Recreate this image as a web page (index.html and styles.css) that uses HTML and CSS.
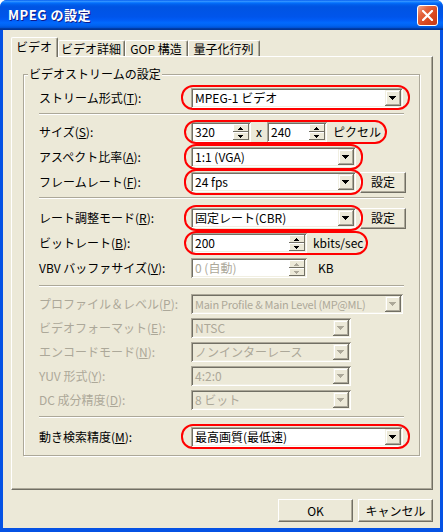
FILE: index.html
```html
<!DOCTYPE html>
<html lang="ja">
<head>
<meta charset="utf-8">
<title>MPEG の設定</title>
<link rel="stylesheet" href="styles.css">
</head>
<body>
<div class="window">
  <div class="titlebar">
    <span class="title">MPEG の設定</span>
    <span class="close"><svg width="11" height="11" viewBox="0 0 11 11"><path d="M1 1L10 10M10 1L1 10" stroke="#fff" stroke-width="2.2" stroke-linecap="square"/></svg></span>
  </div>
  <div class="client">
    <div class="tabs">
      <div class="tab tab-active">ビデオ</div>
      <div class="tab t2">ビデオ詳細</div>
      <div class="tab t3">GOP 構造</div>
      <div class="tab t4">量子化行列</div>
    </div>
    <div class="panel">
      <div class="group">
        <span class="legend">ビデオストリームの設定</span>

        <div class="row r1">
          <span class="label">ストリーム形式(<u>T</u>):</span>
          <div class="combo w-long mark m-stream"><span class="val">MPEG-1 ビデオ</span><span class="drop"><svg width="7" height="4" viewBox="0 0 7 4"><path d="M0 0h7v1h-1v1h-1v1h-1v1h-1v-1h-1v-1h-1v-1h-1z"/></svg></span></div>
        </div>
        <div class="sep s1"></div>

        <div class="section sec-a">
          <div class="row">
            <span class="label">サイズ(<u>S</u>):</span>
            <div class="sizegroup mark m-size">
              <div class="edit w-size"><span class="val">320</span><span class="spin"><span class="sp up"><svg width="5" height="3" viewBox="0 0 5 3"><path d="M2 0h1v1h1v1h1v1h-5v-1h1v-1h1z"/></svg></span><span class="sp dn"><svg width="5" height="3" viewBox="0 0 5 3"><path d="M0 0h5v1h-1v1h-1v1h-1v-1h-1v-1h-1z"/></svg></span></span></div>
              <span class="times">x</span>
              <div class="edit w-size"><span class="val">240</span><span class="spin"><span class="sp up"><svg width="5" height="3" viewBox="0 0 5 3"><path d="M2 0h1v1h1v1h1v1h-5v-1h1v-1h1z"/></svg></span><span class="sp dn"><svg width="5" height="3" viewBox="0 0 5 3"><path d="M0 0h5v1h-1v1h-1v1h-1v-1h-1v-1h-1z"/></svg></span></span></div>
              <span class="unit">ピクセル</span>
            </div>
          </div>
          <div class="row">
            <span class="label">アスペクト比率(<u>A</u>):</span>
            <div class="combo w-mid mark m-mid"><span class="val">1:1 (VGA)</span><span class="drop"><svg width="7" height="4" viewBox="0 0 7 4"><path d="M0 0h7v1h-1v1h-1v1h-1v1h-1v-1h-1v-1h-1v-1h-1z"/></svg></span></div>
          </div>
          <div class="row">
            <span class="label">フレームレート(<u>F</u>):</span>
            <div class="combo w-mid mark m-mid"><span class="val">24 fps</span><span class="drop"><svg width="7" height="4" viewBox="0 0 7 4"><path d="M0 0h7v1h-1v1h-1v1h-1v1h-1v-1h-1v-1h-1v-1h-1z"/></svg></span></div>
            <span class="btn btn-set">設定</span>
          </div>
        </div>
        <div class="sep s2"></div>

        <div class="section sec-b">
          <div class="row">
            <span class="label">レート調整モード(<u>R</u>):</span>
            <div class="combo w-mid mark m-mid"><span class="val">固定レート(CBR)</span><span class="drop"><svg width="7" height="4" viewBox="0 0 7 4"><path d="M0 0h7v1h-1v1h-1v1h-1v1h-1v-1h-1v-1h-1v-1h-1z"/></svg></span></div>
            <span class="btn btn-set">設定</span>
          </div>
          <div class="row">
            <span class="label">ビットレート(<u>B</u>):</span>
            <div class="bitgroup mark m-bit">
              <div class="edit w-bit"><span class="val">200</span><span class="spin"><span class="sp up"><svg width="5" height="3" viewBox="0 0 5 3"><path d="M2 0h1v1h1v1h1v1h-5v-1h1v-1h1z"/></svg></span><span class="sp dn"><svg width="5" height="3" viewBox="0 0 5 3"><path d="M0 0h5v1h-1v1h-1v1h-1v-1h-1v-1h-1z"/></svg></span></span></div>
              <span class="unit">kbits/sec</span>
            </div>
          </div>
          <div class="row">
            <span class="label">VBV バッファサイズ(<u>V</u>):</span>
            <div class="edit w-bit disabled"><span class="val">0 (自動)</span><span class="spin"><span class="sp up"><svg width="5" height="3" viewBox="0 0 5 3"><path d="M2 0h1v1h1v1h1v1h-5v-1h1v-1h1z"/></svg></span><span class="sp dn"><svg width="5" height="3" viewBox="0 0 5 3"><path d="M0 0h5v1h-1v1h-1v1h-1v-1h-1v-1h-1z"/></svg></span></span></div>
            <span class="unit kb">KB</span>
          </div>
        </div>
        <div class="sep s3"></div>

        <div class="section sec-c">
          <div class="row dis">
            <span class="label">プロファイル＆レベル(<u>P</u>):</span>
            <div class="combo w-long disabled"><span class="val narrow">Main Profile &amp; Main Level (MP@ML)</span><span class="drop"><svg width="7" height="4" viewBox="0 0 7 4"><path d="M0 0h7v1h-1v1h-1v1h-1v1h-1v-1h-1v-1h-1v-1h-1z"/></svg></span></div>
          </div>
          <div class="row dis">
            <span class="label">ビデオフォーマット(<u>E</u>):</span>
            <div class="combo w-short disabled"><span class="val">NTSC</span><span class="drop"><svg width="7" height="4" viewBox="0 0 7 4"><path d="M0 0h7v1h-1v1h-1v1h-1v1h-1v-1h-1v-1h-1v-1h-1z"/></svg></span></div>
          </div>
          <div class="row dis">
            <span class="label">エンコードモード(<u>N</u>):</span>
            <div class="combo w-short disabled"><span class="val">ノンインターレース</span><span class="drop"><svg width="7" height="4" viewBox="0 0 7 4"><path d="M0 0h7v1h-1v1h-1v1h-1v1h-1v-1h-1v-1h-1v-1h-1z"/></svg></span></div>
          </div>
          <div class="row dis">
            <span class="label">YUV 形式(<u>Y</u>):</span>
            <div class="combo w-short disabled"><span class="val">4:2:0</span><span class="drop"><svg width="7" height="4" viewBox="0 0 7 4"><path d="M0 0h7v1h-1v1h-1v1h-1v1h-1v-1h-1v-1h-1v-1h-1z"/></svg></span></div>
          </div>
          <div class="row dis">
            <span class="label">DC 成分精度(<u>D</u>):</span>
            <div class="combo w-short disabled"><span class="val">8 ビット</span><span class="drop"><svg width="7" height="4" viewBox="0 0 7 4"><path d="M0 0h7v1h-1v1h-1v1h-1v1h-1v-1h-1v-1h-1v-1h-1z"/></svg></span></div>
          </div>
        </div>
        <div class="sep s4"></div>

        <div class="row r13">
          <span class="label">動き検索精度(<u>M</u>):</span>
          <div class="combo w-long mark m-stream"><span class="val">最高画質(最低速)</span><span class="drop"><svg width="7" height="4" viewBox="0 0 7 4"><path d="M0 0h7v1h-1v1h-1v1h-1v1h-1v-1h-1v-1h-1v-1h-1z"/></svg></span></div>
        </div>
      </div>
    </div>
    <div class="buttons">
      <span class="btn btn-dlg">OK</span>
      <span class="btn btn-dlg">キャンセル</span>
    </div>
  </div>
</div>
</body>
</html>
```

FILE: styles.css
```css
* { box-sizing: border-box; }
html, body { margin: 0; padding: 0; }
body {
  width: 443px;
  height: 532px;
  overflow: hidden;
  background: #ffffff;
  font-family: "Noto Sans CJK JP", "Noto Sans", sans-serif;
  font-size: 12px;
  line-height: 16px;
  color: #000;
}
u { text-decoration: underline; text-underline-offset: 1px; }

.window {
  width: 443px;
  height: 532px;
  display: flex;
  flex-direction: column;
  background: #0552E4;
  border-radius: 7px 7px 0 0;
  overflow: hidden;
}

.titlebar {
  height: 30px;
  flex: none;
  display: flex;
  align-items: center;
  padding: 0 5px 0 8px;
  background: linear-gradient(to bottom,
    #0058ee 0%, #3593ff 4%, #288eff 6%, #127dff 8%, #036ffc 10%,
    #0262ee 14%, #0057e5 20%, #0054e3 24%, #0055eb 56%, #005bf5 66%,
    #026afe 76%, #0062ef 86%, #0052d6 92%, #0040ab 94%, #003092 100%);
}
.title {
  flex: 1;
  color: #fff;
  font-weight: 700;
  font-size: 13px;
  line-height: 18px;
  letter-spacing: 0.5px;
  text-shadow: 1px 1px #0f1b8c;
  padding-bottom: 1px;
}
.close {
  width: 21px;
  height: 21px;
  border: 1px solid #fff;
  border-radius: 3px;
  background: linear-gradient(135deg, #f3a98f 0%, #e4653f 30%, #d9461d 65%, #c4391a 100%);
  display: flex;
  align-items: center;
  justify-content: center;
}

.client {
  flex: 1;
  margin: 0 3px 4px 3px;
  background: #ECE9D8;
  padding: 7px 7px 0 8px;
  display: flex;
  flex-direction: column;
}

/* tabs */
.tabs {
  height: 19px;
  display: flex;
  align-items: flex-end;
  flex: none;
}
.tab {
  height: 16px;
  background: #ECE9D8;
  border-left: 1px solid #fff;
  border-top: 1px solid #fff;
  border-right: 1px solid #716F64;
  box-shadow: inset -1px 0 #ACA899;
  border-radius: 2px 2px 0 0;
  display: flex;
  align-items: center;
  justify-content: center;
  padding-right: 1px;
  white-space: nowrap;
}
.tab-active {
  position: relative;
  z-index: 1;
  width: 47px;
  height: 20px;
  margin-bottom: -1px;
  padding-bottom: 2px;
}
.t2 { width: 67px; }
.t3 { width: 63px; }
.t4 { width: 72px; }

.panel {
  height: 434px;
  flex: none;
  border-left: 1px solid #fff;
  border-top: 1px solid #fff;
  border-right: 1px solid #716F64;
  border-bottom: 1px solid #716F64;
  box-shadow: inset -1px -1px #ACA899;
  padding: 17px 0 0 11px;
}

.group {
  width: 397px;
  height: 382px;
  border: 1px solid #ACA899;
  box-shadow: 1px 1px #fff, inset 1px 1px #fff;
  padding: 0 15px 0 15px;
}
.legend {
  display: block;
  width: fit-content;
  height: 14px;
  margin: -8px 0 0 -11px;
  padding: 0 1px;
  background: #ECE9D8;
  line-height: 14px;
}

.row {
  height: 24px;
  display: flex;
  align-items: center;
}
.r1 { margin-top: 5px; }
.r13 { margin-top: 7px; }
.label {
  width: 152px;
  flex: none;
  white-space: nowrap;
}
.dis { color: #ACA899; }

.section { display: flex; flex-direction: column; }
.sec-a, .sec-b { gap: 1px; }
.sec-a { margin-top: 5px; }
.sec-b { margin-top: 7px; }
.sec-c { margin-top: 5px; }

.sep {
  height: 2px;
  width: 365px;
  border-top: 1px solid #ACA899;
  border-bottom: 1px solid #fff;
}
.s1 { margin-top: 3px; }
.s2 { margin-top: 3px; }
.s3 { margin-top: 5px; }
.s4 { margin-top: 4px; }

/* sunken field */
.combo, .edit {
  height: 20px;
  display: flex;
  align-items: center;
  background: #fff;
  box-shadow: inset 1px 1px #ACA899, inset -1px -1px #fff, inset 2px 2px #716F64, inset -2px -2px #F1EFE2;
  padding: 2px;
  flex: none;
}
.val {
  flex: 1;
  min-width: 0;
  height: 16px;
  line-height: 16px;
  padding-left: 2px;
  white-space: nowrap;
  overflow: hidden;
}
.narrow { font-size: 11px; letter-spacing: -0.25px; }
.w-long { width: 212px; }
.w-mid { width: 165px; }
.w-short { width: 160px; }
.w-size { width: 60px; }
.w-bit { width: 116px; }

.drop {
  width: 16px;
  height: 16px;
  flex: none;
  background: #ECE9D8;
  box-shadow: inset -1px -1px #716F64, inset 1px 1px #F1EFE2, inset -2px -2px #ACA899, inset 2px 2px #fff;
  display: flex;
  align-items: center;
  justify-content: center;
  padding: 0 1px 0 0;
}
.drop svg { fill: #000; }
.disabled { background: #ECE9D8; color: #ACA899; }
.disabled .drop svg, .disabled .sp svg { fill: #ACA899; }
.edit.disabled { background: #fff; }

.spin {
  width: 16px;
  height: 16px;
  flex: none;
  display: flex;
  flex-direction: column;
}
.sp {
  height: 8px;
  background: #ECE9D8;
  box-shadow: inset -1px -1px #716F64, inset 1px 1px #fff;
  display: flex;
  align-items: center;
  justify-content: center;
  padding-right: 1px;
}
.sp svg { fill: #000; }

.sizegroup, .bitgroup { display: flex; align-items: center; }
.times { width: 16px; text-align: center; flex: none; padding-bottom: 1px; }
.unit { margin-left: 6px; white-space: nowrap; }
.kb { margin-left: 11px; }

/* buttons */
.btn {
  display: flex;
  align-items: center;
  justify-content: center;
  background: #ECE9D8;
  border-left: 1px solid #fff;
  border-top: 1px solid #fff;
  border-right: 1px solid #716F64;
  border-bottom: 1px solid #716F64;
  box-shadow: inset -1px -1px #ACA899;
  flex: none;
}
.btn-set {
  width: 46px;
  height: 21px;
  margin-left: 4px;
}
.buttons {
  display: flex;
  justify-content: flex-end;
  gap: 5px;
  margin-top: 9px;
}
.btn-dlg { width: 75px; height: 23px; }

/* red annotation ovals drawn over the controls */
.mark { position: relative; }
.mark::after {
  content: "";
  position: absolute;
  border: 2px solid #ff0000;
  border-radius: 12px;
  pointer-events: none;
}
.m-stream::after { left: -10px; right: -7px; top: -3px; bottom: -2px; }
.m-mid::after { left: -7px; right: -7px; top: -3px; bottom: -3px; }
.m-size::after { left: -7px; right: -6px; top: -2px; bottom: -2px; }
.m-bit::after { left: -7px; right: -5px; top: -2px; bottom: -2px; }
```
